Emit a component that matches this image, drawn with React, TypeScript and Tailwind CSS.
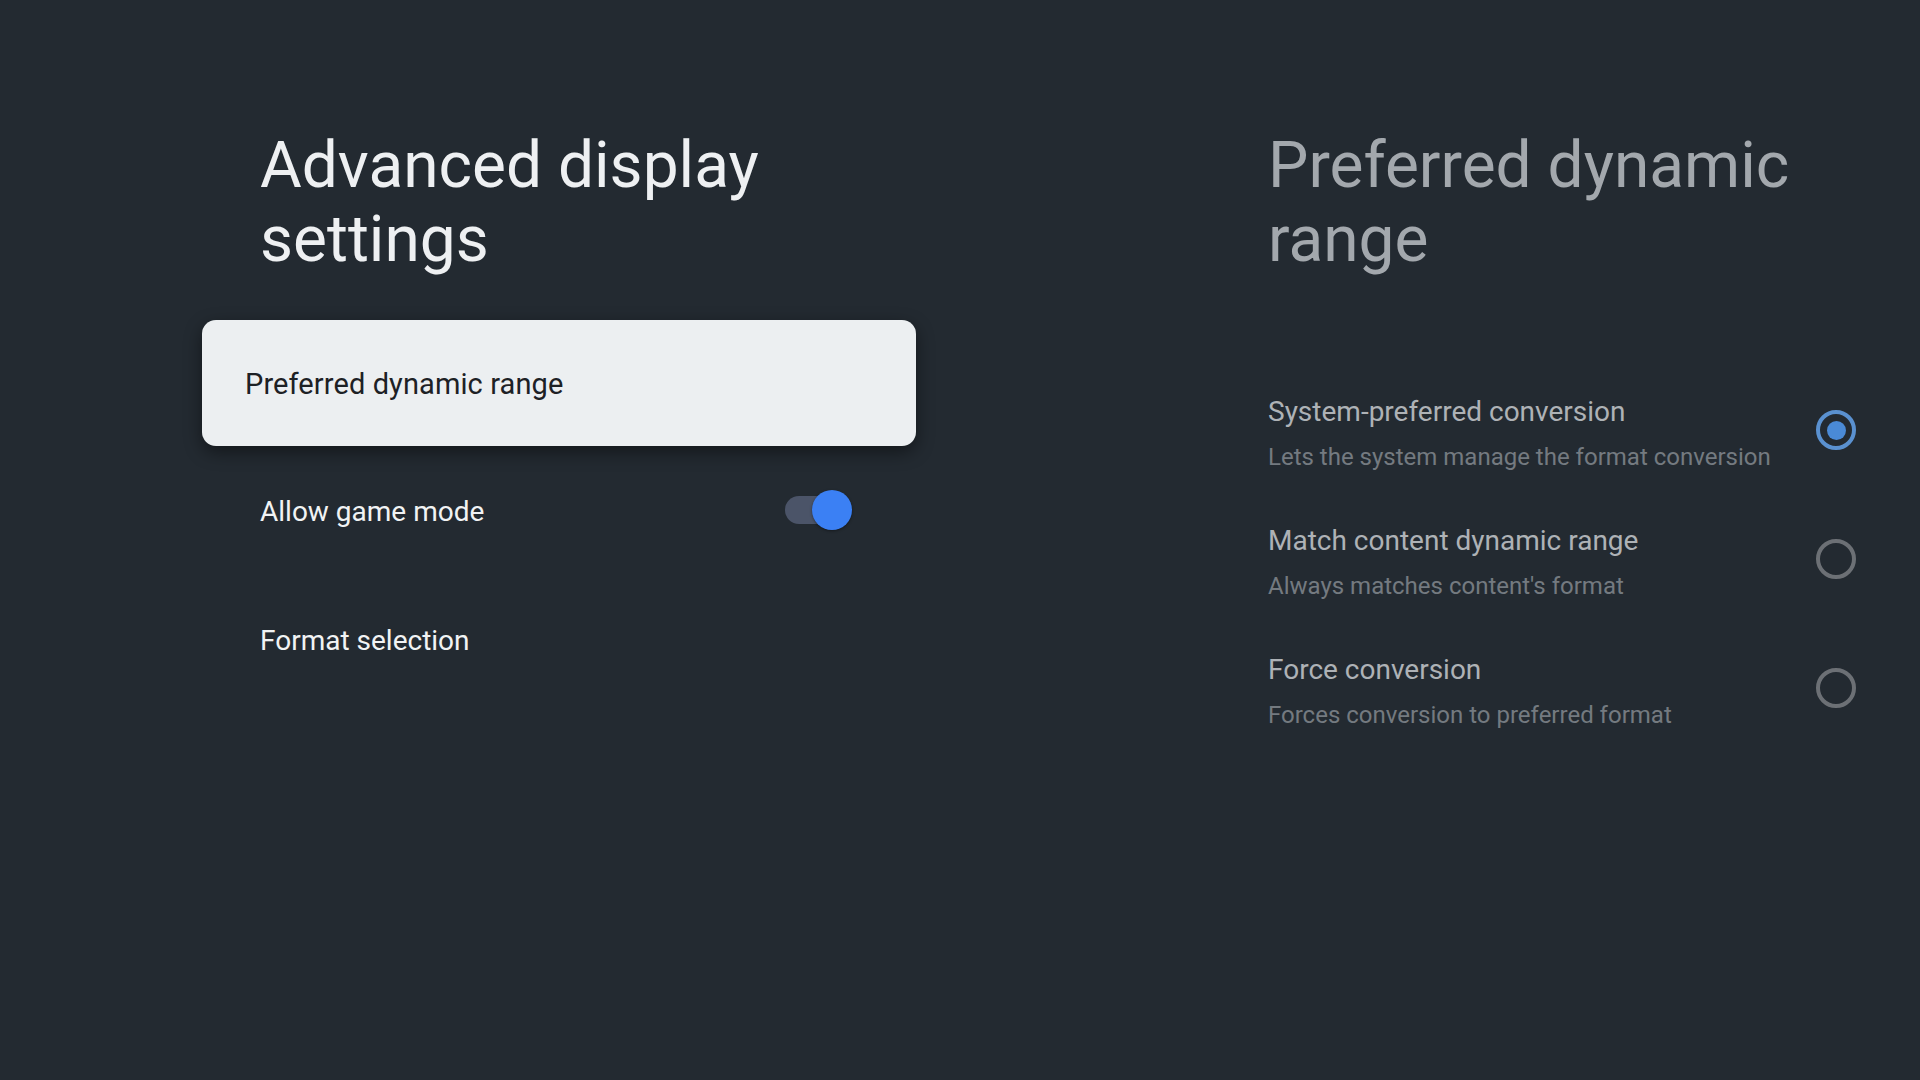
import React, { useState } from 'react';

interface DynamicRangeOption {
    id: string;
    title: string;
    subtitle: string;
}

const options: DynamicRangeOption[] = [
    { id: 'system', title: 'System-preferred conversion', subtitle: 'Lets the system manage the format conversion' },
    { id: 'match', title: 'Match content dynamic range', subtitle: "Always matches content's format" },
    { id: 'force', title: 'Force conversion', subtitle: 'Forces conversion to preferred format' },
];

const App: React.FC = () => {
    const [gameMode, setGameMode] = useState(true);
    const [selected, setSelected] = useState('system');

    return (
        <div
            className="w-[1920px] h-[1080px] bg-[#232a31] flex overflow-hidden"
            style={{ fontFamily: 'Roboto, "Noto Sans", sans-serif' }}
        >
            {/* Left: settings list */}
            <div className="w-[1010px] pl-[202px] pt-[129px] flex flex-col">
                <h1 className="ml-[58px] w-[620px] text-[64px] leading-[74px] text-[#eef0f2] font-normal">
                    Advanced display settings
                </h1>

                <div className="mt-[43px] w-[714px] flex flex-col">
                    {/* Focused row */}
                    <div className="h-[126px] rounded-[14px] bg-[#eceff1] shadow-[0_6px_18px_rgba(0,0,0,0.45)] flex items-center pl-[43px] pt-[4px]">
                        <span className="text-[29px] tracking-[0.1px] text-[#1d2125]">Preferred dynamic range</span>
                    </div>

                    {/* Allow game mode */}
                    <div className="h-[128px] flex items-center justify-between pl-[58px] pr-[64px]">
                        <span className="mt-[3px] text-[28px] text-[#f1f3f4]">Allow game mode</span>
                        <button
                            type="button"
                            onClick={() => setGameMode(!gameMode)}
                            className="relative w-[67px] h-[40px] flex items-center"
                        >
                            <span className={`w-[60px] h-[28px] rounded-full ${gameMode ? 'bg-[#4b5468]' : 'bg-[#5b6066]'}`} />
                            <span
                                className={`absolute top-0 w-[40px] h-[40px] rounded-full shadow-[0_1px_3px_rgba(0,0,0,0.4)] ${gameMode ? 'right-0 bg-[#3b80f4]' : 'left-0 bg-[#c8cbce]'}`}
                            />
                        </button>
                    </div>

                    {/* Format selection */}
                    <div className="h-[128px] flex items-center pl-[58px] pt-[5px]">
                        <span className="text-[28px] text-[#f1f3f4]">Format selection</span>
                    </div>
                </div>
            </div>

            {/* Right: preview of the options */}
            <div className="flex-1 pl-[258px] pr-[64px] pt-[129px] flex flex-col">
                <h2 className="text-[64px] leading-[74px] text-[#a3a8ad] font-normal">
                    Preferred dynamic range
                </h2>

                <div className="mt-[91px] flex flex-col">
                    {options.map((opt) => {
                        const isOn = selected === opt.id;
                        return (
                            <div
                                key={opt.id}
                                onClick={() => setSelected(opt.id)}
                                className="h-[129px] flex items-center justify-between"
                            >
                                <div className="flex flex-col pt-[2px]">
                                    <span className="text-[28px] leading-[36px] text-[#aeb2b6]">{opt.title}</span>
                                    <span className="mt-[11px] text-[24px] leading-[32px] text-[#747a80]">{opt.subtitle}</span>
                                </div>
                                <span
                                    className={`mb-[5px] w-[40px] h-[40px] rounded-full border-[4px] flex items-center justify-center ${isOn ? 'border-[#5a91d0]' : 'border-[#6c7075]'}`}
                                >
                                    {isOn && <span className="w-[19px] h-[19px] rounded-full bg-[#4a8ad6]" />}
                                </span>
                            </div>
                        );
                    })}
                </div>
            </div>
        </div>
    );
};

export default App;
